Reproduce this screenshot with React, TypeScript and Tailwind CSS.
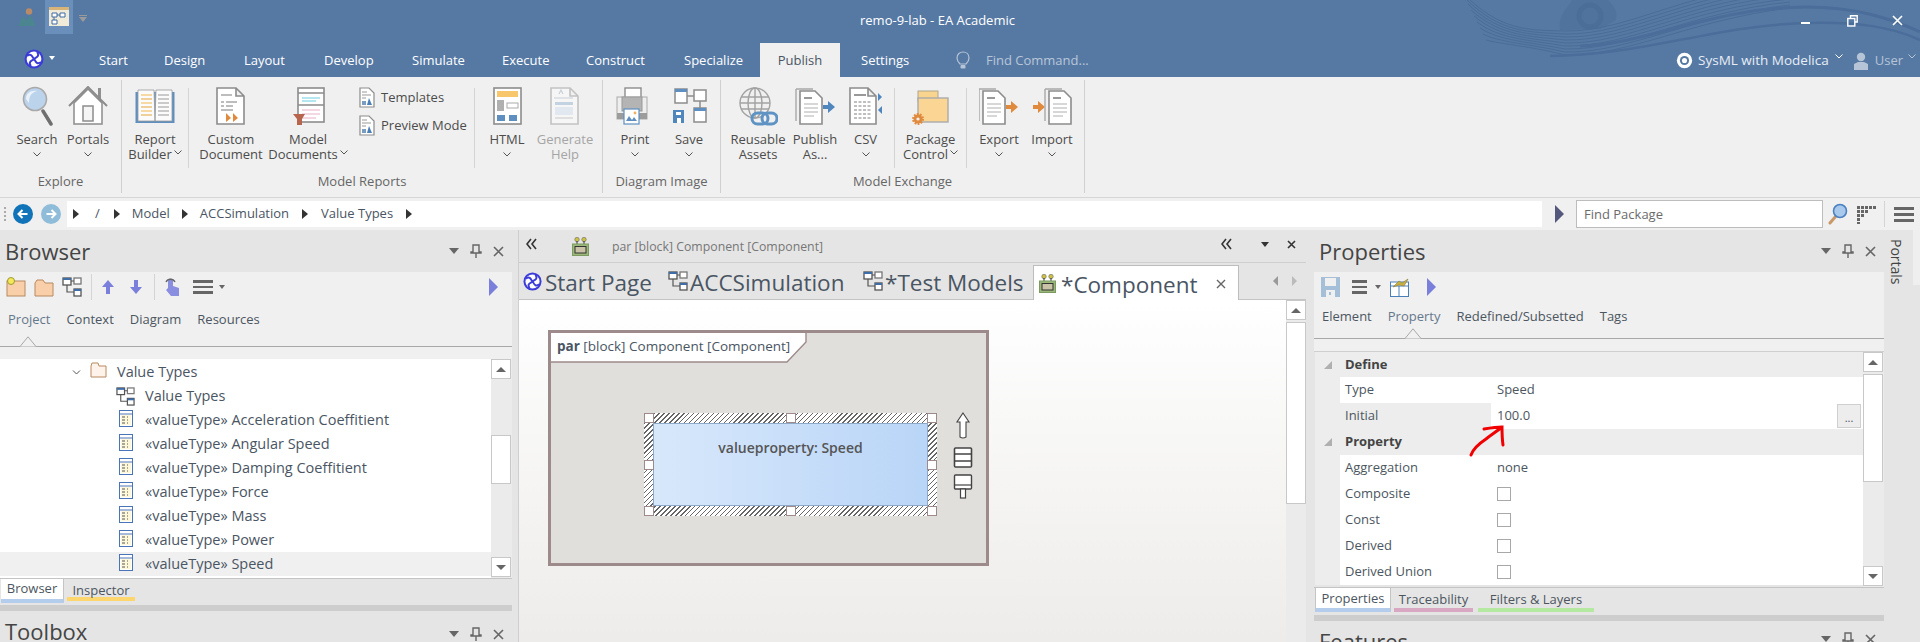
import React from "react";

const G = "#8c8c8c";

function Chevron({ className = "" }: { className?: string }) {
  return (
    <svg width="8" height="5" viewBox="0 0 8 5" className={className}>
      <path d="M0.5 0.5 L4 4 L7.5 0.5" fill="none" stroke="#555" strokeWidth="1" />
    </svg>
  );
}

function Logo({ size = 20 }: { size?: number }) {
  return (
    <svg width={size} height={size} viewBox="0 0 20 20">
      <circle cx="10" cy="10" r="9.5" fill="#3c3cd8" />
      <circle cx="10" cy="10" r="7.4" fill="#fff" />
      <path d="M3 7 C8 3 9 10 10 10 C11 10 12 17 17 13 M13 3 C17 8 10 9 10 10 C10 11 3 12 7 17" fill="none" stroke="#3c3cd8" strokeWidth="2" />
    </svg>
  );
}

function SearchIcon() {
  return (
    <svg width="40" height="40" viewBox="0 0 40 40">
      <path d="M26 25 L34 38" stroke="#6f6f6f" strokeWidth="3.5" strokeLinecap="round" />
      <circle cx="18" cy="13" r="11.5" fill="#bcd3ec" stroke="#a9a9a9" strokeWidth="1.6" />
      <path d="M9 13 C9 7 14 4 20 5 C14 7 12 10 12 17 Z" fill="#e9f1fa" />
    </svg>
  );
}

function HomeIcon() {
  return (
    <svg width="40" height="40" viewBox="0 0 40 40">
      <path d="M30 2 h3 v14 h-3 z" fill="#8f8f8f" />
      <path d="M6 17 L20 3 L34 17 V38 H6 Z" fill="#fff" stroke={G} strokeWidth="1.5" />
      <path d="M1 20 L20 1 L39 20" fill="none" stroke={G} strokeWidth="2" />
      <rect x="15" y="20" width="10" height="15" fill="#f5f5f5" stroke={G} strokeWidth="1.5" />
    </svg>
  );
}

function BookIcon() {
  return (
    <svg width="40" height="40" viewBox="0 0 40 40">
      <rect x="0.5" y="6" width="39" height="31" fill="#5f8fc0" />
      <path d="M3 4 H19 L20 35 H3 Z M37 4 H21 L20 35 H37 Z" fill="#fbfbfb" stroke="#999" strokeWidth="0.8" />
      {[9, 13, 17, 21, 25, 29].map((y) => (
        <g key={y}>
          <path d={`M6 ${y} H17`} stroke={y % 8 === 1 ? "#f2c46d" : "#e8b45a"} strokeWidth="1.2" />
          <path d={`M23 ${y} H34`} stroke="#aaa" strokeWidth="1.2" />
        </g>
      ))}
    </svg>
  );
}

function DocShape({ x = 6, y = 2, w = 27, h = 36 }: { x?: number; y?: number; w?: number; h?: number }) {
  return (
    <path
      d={`M${x} ${y} H${x + w - 8} L${x + w} ${y + 8} V${y + h} H${x} Z M${x + w - 8} ${y} V${y + 8} H${x + w}`}
      fill="#fff"
      stroke={G}
      strokeWidth="1.6"
    />
  );
}

function CustomDocIcon() {
  return (
    <svg width="40" height="40" viewBox="0 0 40 40">
      <DocShape />
      <path d="M10 9 H21 M10 16 H13 M15 16 H26 M10 20 H13 M15 20 H22 M10 24 H22" stroke="#a8a8a8" strokeWidth="1.4" />
      <path d="M15 27 L20 32 L15 36 Z M22 27 L27 32 L22 36 Z" fill="#e08a3e" />
    </svg>
  );
}

function ModelDocIcon() {
  return (
    <svg width="40" height="40" viewBox="0 0 40 40">
      <rect x="10" y="2" width="26" height="34" fill="#fff" stroke={G} strokeWidth="1.6" />
      <path d="M10 7 H36 M10 19 H36" stroke={G} strokeWidth="1.4" />
      <path d="M14 12 H32 M14 15 H28" stroke="#6bd0e0" strokeWidth="1.2" />
      <path d="M14 24 H32 M14 28 H32 M14 32 H28" stroke="#eab0c8" strokeWidth="1.2" />
      <path d="M5 28 H17 L14 33 V39 H9 V33 Z" fill="#b8654e" />
    </svg>
  );
}

function SmallTemplateIcon() {
  return (
    <svg width="16" height="21" viewBox="0 0 16 21">
      <path d="M1 1 H10 L15 6 V20 H1 Z" fill="#fff" stroke={G} strokeWidth="1.2" />
      <path d="M3 5 H8 M3 8 H12 M3 11 H7" stroke="#999" strokeWidth="1" />
      <path d="M8 18 L10 11 L13 18 Z" fill="#4a7fb8" />
      <path d="M3 14 H7 V18 H3 Z" fill="#7a9cc0" />
    </svg>
  );
}

function HtmlIcon() {
  return (
    <svg width="40" height="40" viewBox="0 0 40 40">
      <rect x="7" y="2" width="27" height="36" fill="#fff" stroke={G} strokeWidth="1.6" />
      <rect x="10" y="5" width="21" height="6" fill="#f8c66b" />
      <rect x="10" y="14" width="7" height="11" fill="#b0b0b0" />
      <rect x="20" y="17" width="11" height="5" fill="#fff" stroke="#aaa" />
      <rect x="10" y="29" width="8" height="6" fill="#5f8fc0" />
      <rect x="22" y="29" width="8" height="6" fill="#5f8fc0" />
    </svg>
  );
}

function HelpIcon() {
  return (
    <svg width="40" height="40" viewBox="0 0 40 40" opacity="0.45">
      <DocShape />
      <path d="M14 8 L16 4 L18 8 M9 12 H28" stroke="#9ab" strokeWidth="1.2" fill="none" />
      <rect x="10" y="16" width="18" height="3" fill="#8fb0d0" />
      <rect x="10" y="21" width="18" height="8" fill="#cfe0ee" />
      <path d="M10 32 H28" stroke="#aaa" strokeWidth="1.2" />
    </svg>
  );
}

function PrintIcon() {
  return (
    <svg width="40" height="40" viewBox="0 0 40 40">
      <rect x="10" y="2" width="16" height="12" fill="#fff" stroke={G} strokeWidth="1.4" />
      <rect x="2" y="11" width="30" height="22" fill="#eee" stroke="#aaa" />
      <rect x="7" y="11" width="20" height="14" fill="#b4b4b4" stroke="#999" />
      <rect x="2" y="27" width="30" height="6" fill="#9c9c9c" />
      <rect x="9" y="23" width="15" height="15" fill="#fff" stroke="#5f8fc0" strokeWidth="1.2" />
      <path d="M11 35 L14 30 L17 34 L19 31 L22 35 Z" fill="#5f8fc0" />
      <circle cx="20" cy="27" r="1.4" fill="#f0b060" />
    </svg>
  );
}

function SaveImageIcon() {
  return (
    <svg width="40" height="40" viewBox="0 0 40 40">
      <rect x="6" y="3" width="12" height="14" fill="#fff" stroke={G} strokeWidth="1.5" />
      <rect x="6" y="3" width="12" height="3" fill="#5f8fc0" />
      <rect x="25" y="4" width="12" height="11" fill="#fff" stroke={G} strokeWidth="1.5" />
      <path d="M18 10 H25 M31 15 V22" stroke={G} strokeWidth="1.5" />
      <rect x="25" y="22" width="12" height="14" fill="#fff" stroke={G} strokeWidth="1.5" />
      <rect x="25" y="22" width="12" height="3" fill="#5f8fc0" />
      <rect x="4" y="24" width="11" height="13" fill="#4f86bd" />
      <rect x="7" y="26" width="5" height="3" fill="#fff" />
      <rect x="8" y="32" width="4" height="5" fill="#fff" />
    </svg>
  );
}

function GlobeLinkIcon() {
  return (
    <svg width="40" height="40" viewBox="0 0 40 40">
      <g fill="none" stroke="#a2a2a2" strokeWidth="1.4">
        <circle cx="17" cy="17" r="15" />
        <ellipse cx="17" cy="17" rx="7" ry="15" />
        <path d="M17 2 V32 M3 11 H31 M3 23 H31 M2 17 H32" />
      </g>
      <rect x="14" y="27" width="16" height="11" rx="5.5" fill="none" stroke="#5f93c4" strokeWidth="3" />
      <rect x="24" y="27" width="15" height="11" rx="5.5" fill="none" stroke="#5f93c4" strokeWidth="3" />
    </svg>
  );
}

function DocStack({ x = 2 }: { x?: number }) {
  return (
    <g>
      <path d={`M${x} 3 H${x + 17} M${x} 3 V35`} stroke="#a8a8a8" strokeWidth="1.4" fill="none" />
      <path d={`M${x + 4} 5 H${x + 19} L${x + 26} 12 V38 H${x + 4} Z`} fill="#fff" stroke={G} strokeWidth="1.6" />
      <path d={`M${x + 8} 12 H${x + 16}`} stroke="#999" strokeWidth="2" />
      <path d={`M${x + 8} 18 H${x + 22} M${x + 8} 22 H${x + 22} M${x + 8} 26 H${x + 22} M${x + 8} 30 H${x + 18}`} stroke="#b0b0b0" strokeWidth="1.2" />
    </g>
  );
}

function PublishIcon() {
  return (
    <svg width="40" height="40" viewBox="0 0 40 40">
      <DocStack x={1} />
      <path d="M28 19 H33 V15 L40 21 L33 27 V23 H28 Z" fill="#4f86bd" />
    </svg>
  );
}

function CsvIcon() {
  return (
    <svg width="40" height="40" viewBox="0 0 40 40">
      <DocShape x={4} y={2} w={26} h={36} />
      <rect x="8" y="8" width="12" height="2" fill="#999" />
      {[16, 20, 24, 28, 32].map((y) => (
        <path key={y} d={`M8 ${y} H26`} stroke="#aaa" strokeWidth="1.4" strokeDasharray="3 1.5" />
      ))}
      <path d="M32 7 L36 11 L32 15 Z M36 20 L32 24 L36 28 Z" fill="#4f86bd" />
    </svg>
  );
}

function PackageIcon() {
  return (
    <svg width="40" height="40" viewBox="0 0 40 40">
      <rect x="7" y="5" width="20" height="10" fill="#f9d48f" stroke="#b0a68c" />
      <rect x="7" y="12" width="30" height="24" fill="#fad594" stroke="#aaa" strokeWidth="1.4" />
      <circle cx="7" cy="33" r="4.5" fill="#e08a3e" stroke="#e08a3e" strokeWidth="3" strokeDasharray="1.6 1.2" />
      <circle cx="7" cy="33" r="1.6" fill="#f0f0f0" />
    </svg>
  );
}

function ExportIcon() {
  return (
    <svg width="40" height="40" viewBox="0 0 40 40">
      <DocStack x={0} />
      <path d="M27 19 H32 V15 L39 21 L32 27 V23 H27 Z" fill="#e08a3e" />
    </svg>
  );
}

function ImportIcon() {
  return (
    <svg width="40" height="40" viewBox="0 0 40 40">
      <path d="M1 19 H6 V15 L13 21 L6 27 V23 H1 Z" fill="#e08a3e" />
      <DocStack x={13} />
    </svg>
  );
}

function RibbonButton({
  width,
  icon,
  lines,
  chevron,
  disabled,
}: {
  width: string;
  icon: React.ReactNode;
  lines: string[];
  chevron?: boolean;
  disabled?: boolean;
}) {
  return (
    <div className={`${width} flex flex-col items-center ${disabled ? "text-[#a5a5a5]" : ""}`}>
      <div className="h-[52px] flex items-center justify-center">{icon}</div>
      {lines.map((l, i) => (
        <div key={l} className="h-[15px] leading-[15px] whitespace-nowrap flex items-center">
          {l}
          {chevron && lines.length === 2 && i === 1 && <Chevron className="ml-0.5 mb-1" />}
        </div>
      ))}
      {chevron && lines.length === 1 && (
        <div className="h-[15px] flex items-center">
          <Chevron />
        </div>
      )}
    </div>
  );
}

function RibbonSep() {
  return <div className="w-px h-[80px] bg-[#d4d4d4] mt-[8px]" />;
}

function RibbonGroup({ width, label, children }: { width: string; label: string; children: React.ReactNode }) {
  return (
    <div className={`${width} h-[113px] border-r border-[#d0d0d0] flex flex-col`}>
      <div className="flex h-[92px]">{children}</div>
      <div className="text-center text-[#666] leading-[18px]">{label}</div>
    </div>
  );
}

const topTabs = [
  { t: "Start", w: "w-[65px]" },
  { t: "Design", w: "w-[80px]" },
  { t: "Layout", w: "w-[80px]" },
  { t: "Develop", w: "w-[88px]" },
  { t: "Simulate", w: "w-[90px]" },
  { t: "Execute", w: "w-[84px]" },
  { t: "Construct", w: "w-[98px]" },
  { t: "Specialize", w: "w-[76px]" },
];

function Swoosh() {
  return (
    <svg className="absolute right-0 top-0 pointer-events-none" width="460" height="77" viewBox="0 0 460 77">
      <path d="M100 30 C98 14 108 8 112 0 H148 C154 6 158 12 156 20 L140 29 Z" fill="#4f739d" />
      <circle cx="130" cy="16" r="11" fill="none" stroke="#4a6e97" strokeWidth="5" />
      {[0, 1, 2, 3, 4, 5, 6, 7, 8].map((i) => (
        <path
          key={i}
          d={`M${2 + i * 3} ${i * 6 - 8} C40 ${32 + i * 1.5}, 70 ${30 + i * 2}, 105 ${31 + i * 3} C170 ${32 + i * 3}, 230 ${-12 + i * 4}, 330 ${-16 + i * 3}`}
          fill="none"
          stroke="#4a6d98"
          strokeWidth="1"
        />
      ))}
      <path d="M120 46 C190 44 250 8 345 7 C395 7 430 18 460 32" fill="none" stroke="#4a6e99" strokeWidth="3" />
      <path d="M90 56 C180 56 260 24 350 23 C395 22 430 26 460 40" fill="none" stroke="#4a6e99" strokeWidth="2.5" />
    </svg>
  );
}

function TitleBar() {
  return (
    <div className="relative h-[77px] bg-[#5679a4] text-white shrink-0">
      <Swoosh />
      <div className="relative h-[43px] flex">
        <div className="w-[860px] flex">
          <div className="w-[45px] flex justify-end items-start pt-[8px] pr-[9px]">
            <svg width="18" height="18" viewBox="0 0 18 18">
              <circle cx="11" cy="3.5" r="3.2" fill="#b98a68" />
              <path d="M0 18 L5 8 L9 13 L11 8 H13 L18 18 Z" fill="#4a8590" />
            </svg>
          </div>
          <div className="w-[28px] h-[34px] bg-[#6b8fbb] flex justify-center pt-[7px]">
            <svg width="20" height="19" viewBox="0 0 20 19">
              <rect x="0" y="0" width="20" height="19" fill="#f0ead8" />
              <rect x="0" y="0" width="20" height="3" fill="#d8b478" />
              <path d="M3 6 h5 v4 h-5 z M11 6 h5 v4 h-5 z M3 13 h5 v4 h-5 z" fill="#fff" stroke="#3f6da0" />
              <path d="M8 8 h3 M5 10 v3" stroke="#3f6da0" />
            </svg>
          </div>
          <div className="ml-[6px] mt-[15px] w-[8px] flex flex-col items-center gap-px">
            <div className="w-[8px] h-px bg-[#9a9a9a]" />
            <div className="w-0 h-0 border-x-[4px] border-x-transparent border-t-[5px] border-t-[#9a9a9a]" />
          </div>
        </div>
        <div className="text-[13px] leading-[40px] whitespace-nowrap">remo-9-lab - EA Academic</div>
        <div className="ml-auto flex">
          <div className="w-[46px] flex justify-center pt-[22px] pr-[4px]">
            <div className="w-[9px] h-[2px] bg-white" />
          </div>
          <div className="w-[44px] flex justify-center pt-[15px]">
            <svg width="11" height="12" viewBox="0 0 11 12">
              <path d="M3.5 3 V0.8 H10.2 V7 H8" fill="none" stroke="#fff" strokeWidth="1.4" />
              <rect x="0.8" y="3.5" width="7" height="7.5" fill="none" stroke="#fff" strokeWidth="1.4" />
            </svg>
          </div>
          <div className="w-[46px] flex justify-center pt-[15px]">
            <svg width="11" height="11" viewBox="0 0 11 11">
              <path d="M1 1 L10 10 M10 1 L1 10" stroke="#fff" strokeWidth="1.6" />
            </svg>
          </div>
        </div>
      </div>
      <div className="relative h-[34px] flex text-[13px] leading-[34px]">
        <div className="w-[99px] flex items-start">
          <div className="ml-[24px] mt-[6px]">
            <Logo />
          </div>
          <div className="ml-[5px] mt-[13px] w-0 h-0 border-x-[3.5px] border-x-transparent border-t-[4px] border-t-white" />
        </div>
        {topTabs.map((tab) => (
          <div key={tab.t} className={`${tab.w} whitespace-nowrap`}>
            {tab.t}
          </div>
        ))}
        <div className="w-[80px] bg-[#f0f0f0] text-[#4a5563] text-center">Publish</div>
        <div className="w-[115px] pl-[21px]">Settings</div>
        <div className="w-[31px] flex pt-[8px] pl-[1px]">
          <svg width="14" height="19" viewBox="0 0 14 19">
            <path d="M4 13 C1 10 1 8 1 7 C1 3 4 1 7 1 C10 1 13 3 13 7 C13 8 13 10 10 13 Z" fill="none" stroke="#b5c4d6" strokeWidth="1.2" />
            <rect x="4.5" y="14" width="5" height="3.5" rx="1" fill="#b5c4d6" />
          </svg>
        </div>
        <div className="text-[#b8c6d8]">Find Command...</div>
        <div className="ml-auto flex items-start">
          <svg width="17" height="17" viewBox="0 0 16 16" className="mt-[9px] mr-[5px]">
            <circle cx="8" cy="8" r="7.2" fill="#fff" />
            <circle cx="8" cy="8" r="4.3" fill="#5679a4" />
            <circle cx="8" cy="8" r="2.4" fill="#fff" />
          </svg>
          <span className="text-[13.5px] text-[#e6edf5]">SysML with Modelica</span>
          <svg width="8" height="5" viewBox="0 0 8 5" className="mt-[11px] ml-[6px]">
            <path d="M0.5 0.5 L4 4 L7.5 0.5" fill="none" stroke="#fff" strokeWidth="1" />
          </svg>
          <svg width="14" height="18" viewBox="0 0 14 18" className="mt-[9px] ml-[11px] mr-[7px]">
            <circle cx="7" cy="5" r="4.2" fill="#b5c4d6" />
            <path d="M0 18 V12 L4 10 H10 L14 12 V18 Z" fill="#b5c4d6" />
          </svg>
          <span className="text-[13px] text-[#b5c4d6]">User</span>
          <svg width="8" height="5" viewBox="0 0 8 5" className="mt-[11px] ml-[5px] mr-[4px]">
            <path d="M0.5 0.5 L4 4 L7.5 0.5" fill="none" stroke="#b5c4d6" strokeWidth="1" />
          </svg>
        </div>
      </div>
    </div>
  );
}

function Ribbon() {
  return (
    <div className="h-[121px] bg-[#f0f0f0] border-b border-[#d6d6d6] pt-[3px] flex text-[13px] text-[#4c4c4c] shrink-0">
      <RibbonGroup width="w-[122px]" label="Explore">
        <div className="w-[12px]" />
        <RibbonButton width="w-[50px]" icon={<SearchIcon />} lines={["Search"]} chevron />
        <RibbonButton width="w-[52px]" icon={<HomeIcon />} lines={["Portals"]} chevron />
      </RibbonGroup>
      <RibbonGroup width="w-[481px]" label="Model Reports">
        <RibbonButton width="w-[66px]" icon={<BookIcon />} lines={["Report", "Builder"]} chevron />
        <RibbonSep />
        <RibbonButton width="w-[84px]" icon={<CustomDocIcon />} lines={["Custom", "Document"]} />
        <RibbonButton width="w-[70px]" icon={<ModelDocIcon />} lines={["Model", "Documents"]} chevron />
        <div className="w-[131px] pl-[16px] pt-[7px] flex flex-col gap-[7px]">
          <div className="flex items-center gap-[6px]">
            <SmallTemplateIcon />
            Templates
          </div>
          <div className="flex items-center gap-[6px]">
            <SmallTemplateIcon />
            Preview Mode
          </div>
        </div>
        <RibbonSep />
        <RibbonButton width="w-[64px]" icon={<HtmlIcon />} lines={["HTML"]} chevron />
        <RibbonButton width="w-[52px]" icon={<HelpIcon />} lines={["Generate", "Help"]} disabled />
      </RibbonGroup>
      <RibbonGroup width="w-[118px]" label="Diagram Image">
        <div className="w-[7px]" />
        <RibbonButton width="w-[50px]" icon={<PrintIcon />} lines={["Print"]} chevron />
        <div className="w-[4px]" />
        <RibbonButton width="w-[50px]" icon={<SaveImageIcon />} lines={["Save"]} chevron />
      </RibbonGroup>
      <RibbonGroup width="w-[364px]" label="Model Exchange">
        <div className="w-[5px]" />
        <RibbonButton width="w-[64px]" icon={<GlobeLinkIcon />} lines={["Reusable", "Assets"]} />
        <RibbonButton width="w-[50px]" icon={<PublishIcon />} lines={["Publish", "As..."]} />
        <RibbonButton width="w-[51px]" icon={<CsvIcon />} lines={["CSV"]} chevron />
        <div className="w-[3px]" />
        <RibbonSep />
        <RibbonButton width="w-[71px]" icon={<PackageIcon />} lines={["Package", "Control"]} chevron />
        <RibbonSep />
        <div className="w-[7px]" />
        <RibbonButton width="w-[50px]" icon={<ExportIcon />} lines={["Export"]} chevron />
        <div className="w-[3px]" />
        <RibbonButton width="w-[50px]" icon={<ImportIcon />} lines={["Import"]} chevron />
      </RibbonGroup>
    </div>
  );
}

function Tri({ className = "" }: { className?: string }) {
  return <div className={`w-0 h-0 border-y-[5px] border-y-transparent border-l-[6px] border-l-[#333] ${className}`} />;
}

function NavCircle({ dark }: { dark?: boolean }) {
  return (
    <svg width="22" height="22" viewBox="0 0 22 22">
      <circle cx="11" cy="11" r="10" fill={dark ? "#1274b8" : "#8fbcd8"} />
      <path
        d={dark ? "M15.5 11 H7 M10.5 7 L6.5 11 L10.5 15" : "M6.5 11 H15 M11.5 7 L15.5 11 L11.5 15"}
        fill="none"
        stroke="#fff"
        strokeWidth="2"
      />
    </svg>
  );
}

function PathBar() {
  return (
    <div className="h-[32px] bg-[#f0f0f0] flex items-center text-[13px] text-[#4a5563] shrink-0">
      <div className="w-[2px] h-[14px] ml-[4px] mr-[6px] border-l-2 border-dotted border-[#aaa]" />
      <NavCircle dark />
      <div className="w-[6px]" />
      <NavCircle />
      <div className="ml-[5px] w-[1475px] h-[26px] bg-white flex items-center">
        <Tri className="ml-[6px]" />
        <span className="ml-[16px]">/</span>
        <Tri className="ml-[14px]" />
        <span className="ml-[12px]">Model</span>
        <Tri className="ml-[12px]" />
        <span className="ml-[12px]">ACCSimulation</span>
        <Tri className="ml-[13px]" />
        <span className="ml-[13px]">Value Types</span>
        <Tri className="ml-[13px]" />
      </div>
      <div className="ml-[13px] w-0 h-0 border-y-[9px] border-y-transparent border-l-[9px] border-l-[#54587c]" />
      <div className="ml-[12px] w-[247px] h-[28px] bg-white border border-[#bdbdbd] pl-[7px] leading-[26px] text-[#6b6b6b] text-[13px]">
        Find Package
      </div>
      <svg width="20" height="22" viewBox="0 0 20 22" className="ml-[5px]">
        <path d="M8 13 L2 20" stroke="#c89868" strokeWidth="3" strokeLinecap="round" />
        <circle cx="12" cy="8" r="6.5" fill="#a8c8ec" stroke="#4a7fc0" strokeWidth="1.6" />
      </svg>
      <svg width="20" height="20" viewBox="0 0 20 20" className="ml-[8px]">
        {[
          [1, 2],
          [5, 2],
          [9, 2],
          [13, 2],
          [17, 2],
          [1, 6],
          [5, 6],
          [9, 6],
          [1, 10],
          [5, 10],
          [1, 14],
          [1, 18],
        ].map(([x, y]) => (
          <rect key={`${x}-${y}`} x={x} y={y} width="3" height="3" fill="#666" />
        ))}
      </svg>
      <div className="ml-[8px] w-px h-[26px] bg-[#d4d4d4]" />
      <div className="ml-[9px] w-[20px] flex flex-col gap-[3px]">
        <div className="h-[3px] bg-[#666]" />
        <div className="h-[3px] bg-[#666]" />
        <div className="h-[3px] bg-[#666]" />
      </div>
    </div>
  );
}

function PanelControls() {
  return (
    <div className="flex items-center gap-[11px] pr-[8px]">
      <div className="w-0 h-0 border-x-[5px] border-x-transparent border-t-[6px] border-t-[#666]" />
      <svg width="12" height="14" viewBox="0 0 12 14">
        <path d="M3 1 H9 V8 H11 V9 H1 V8 H3 Z M6 9 V14" fill="none" stroke="#666" strokeWidth="1.4" />
      </svg>
      <svg width="11" height="11" viewBox="0 0 11 11">
        <path d="M1 1 L10 10 M10 1 L1 10" stroke="#666" strokeWidth="1.6" />
      </svg>
    </div>
  );
}

function Hamburger() {
  return (
    <div className="w-[20px] flex flex-col gap-[3px]">
      <div className="h-[2.5px] bg-[#666]" />
      <div className="h-[2.5px] bg-[#666]" />
      <div className="h-[2.5px] bg-[#666]" />
    </div>
  );
}

function DiagramGlyph({ size = 20 }: { size?: number }) {
  return (
    <svg width={size} height={size} viewBox="0 0 20 20">
      <rect x="1" y="1" width="8" height="7" fill="#fff" stroke="#555" strokeWidth="1.3" />
      <rect x="12" y="1" width="7" height="6" fill="#fff" stroke="#777" strokeWidth="1.3" />
      <rect x="12" y="12" width="7" height="7" fill="#fff" stroke="#555" strokeWidth="1.3" />
      <rect x="1" y="1" width="8" height="2" fill="#3f6da8" />
      <rect x="12" y="12" width="7" height="2" fill="#3f6da8" />
      <path d="M9 4 H12 M5 8 V15 H12" fill="none" stroke="#555" strokeWidth="1.2" />
    </svg>
  );
}

function BrowserToolbar() {
  return (
    <div className="h-[30px] bg-[#f0f0f0] flex items-center">
      <div className="w-[2px]" />
      <div className="w-[28px] flex justify-center">
        <svg width="20" height="20" viewBox="0 0 20 20">
          <rect x="1" y="4" width="18" height="15" fill="#f8cfa8" stroke="#b88a60" />
          <circle cx="5" cy="4" r="3.5" fill="#f4e85a" stroke="#9c9a30" />
        </svg>
      </div>
      <div className="w-[28px] flex justify-center">
        <svg width="20" height="19" viewBox="0 0 20 19">
          <path d="M1 5 L3 2 H9 L11 5 H19 V18 H1 Z" fill="#f8cfa8" stroke="#b88a60" />
        </svg>
      </div>
      <div className="w-[28px] flex justify-center">
        <DiagramGlyph />
      </div>
      <div className="ml-[5px] w-px h-[26px] bg-[#d4d4d4]" />
      <div className="w-[27px] flex justify-center ml-[2px]">
        <svg width="12" height="14" viewBox="0 0 12 14">
          <path d="M6 0 L12 7 H8 V14 H4 V7 H0 Z" fill="#7a7fdc" />
        </svg>
      </div>
      <div className="w-[29px] flex justify-center">
        <svg width="12" height="14" viewBox="0 0 12 14">
          <path d="M6 14 L12 7 H8 V0 H4 V7 H0 Z" fill="#7a7fdc" />
        </svg>
      </div>
      <div className="ml-[4px] w-px h-[26px] bg-[#d4d4d4]" />
      <div className="ml-[9px] w-[16px] flex justify-center">
        <svg width="16" height="20" viewBox="0 0 16 20">
          <path d="M4 11 V4 A2.5 2.5 0 0 1 9 4 V9 L15 11 V19 H7 L2 13 Z" fill="#8a8ee0" />
          <path d="M2 5 A5 5 0 0 1 11 5" fill="none" stroke="#666" strokeWidth="1.4" />
        </svg>
      </div>
      <div className="ml-[13px]">
        <Hamburger />
      </div>
      <div className="ml-[6px] w-0 h-0 border-x-[3px] border-x-transparent border-t-[4px] border-t-[#666]" />
      <div className="ml-auto mr-[14px] w-0 h-0 border-y-[9px] border-y-transparent border-l-[9px] border-l-[#7a7fdc]" />
    </div>
  );
}

function ScrollBtn({ up }: { up?: boolean }) {
  return (
    <div className="w-[20px] h-[20px] bg-white border border-[#c8c8c8] flex items-center justify-center shrink-0">
      <div
        className={`w-0 h-0 border-x-[5px] border-x-transparent ${
          up ? "border-b-[5px] border-b-[#666]" : "border-t-[5px] border-t-[#666]"
        }`}
      />
    </div>
  );
}

function ClassGlyph() {
  return (
    <svg width="14" height="17" viewBox="0 0 14 17">
      <rect x="0.5" y="0.5" width="13" height="16" fill="#fff" stroke="#4a74b8" />
      <path d="M0.5 4 H13.5" stroke="#4a74b8" />
      <rect x="2" y="5" width="10" height="10" fill="#fdf9d8" />
      <path d="M3 7 H6 M3 10 H6 M3 13 H6 M8 7 H9 M8 10 H9 M8 13 H9" stroke="#555" />
    </svg>
  );
}

function BrowserTree() {
  const types = ["Acceleration Coeffitient", "Angular Speed", "Damping Coeffitient", "Force", "Mass", "Power", "Speed"];
  return (
    <div className="h-[219px] flex bg-white">
      <div className="flex-1 pt-px text-[14.5px] text-[#4a5563] overflow-hidden">
        <div className="h-[24px] flex items-center">
          <div className="w-[72px]" />
          <Chevron className="w-[9px]" />
          <svg width="17" height="16" viewBox="0 0 17 16" className="ml-[9px] -mt-[4px]">
            <path d="M1 4 L2 1 H8 L9 4 H16 V15 H1 Z" fill="#fdf3ea" stroke="#b88a60" />
          </svg>
          <span className="ml-[10px]">Value Types</span>
        </div>
        <div className="h-[24px] flex items-center">
          <div className="w-[116px] flex justify-end shrink-0" />
          <DiagramGlyph size={19} />
          <span className="ml-[10px]">Value Types</span>
        </div>
        {types.map((t) => (
          <div key={t} className={`h-[24px] flex items-center ${t === "Speed" ? "bg-[#f0f0f0]" : ""}`}>
            <div className="w-[119px] shrink-0" />
            <div className="-mt-[4px] flex">
              <ClassGlyph />
            </div>
            <span className="ml-[12px] whitespace-nowrap">«valueType» {t}</span>
          </div>
        ))}
        <div className="ml-[91px] mt-[2px] w-[10px] h-px bg-[#b88a60]" />
      </div>
      <div className="w-[21px] bg-[#ebebeb] flex flex-col pt-0">
        <ScrollBtn up />
        <div className="h-[56px]" />
        <div className="w-[20px] h-[49px] bg-white border border-[#c8c8c8]" />
        <div className="flex-1" />
        <ScrollBtn />
        <div className="h-px" />
      </div>
    </div>
  );
}

function TabNotch({ cls }: { cls: string }) {
  return (
    <svg width="18" height="11" viewBox="0 0 18 11" className={`absolute bottom-0 ${cls}`}>
      <path d="M0 10.5 H1 L9 0.8 L17 10.5 H18" fill="#f0f0f0" stroke="#a8a8a8" />
    </svg>
  );
}

function LeftPanel() {
  return (
    <div className="w-[512px] flex flex-col shrink-0">
      <div className="h-[42px] flex items-center justify-between pl-[5px] text-[#444]">
        <span className="text-[22px]">Browser</span>
        <PanelControls />
      </div>
      <BrowserToolbar />
      <div className="h-[57px] bg-[#f0f0f0] flex flex-col">
        <div className="relative h-[45px] border-b border-[#a8a8a8] flex items-start pt-[8px] pl-[8px] gap-4 text-[13px] text-[#4c5660]">
          <span className="text-[#66788c]">Project</span>
          <span>Context</span>
          <span>Diagram</span>
          <span>Resources</span>
          <TabNotch cls="left-[19px] -mb-px" />
        </div>
      </div>
      <BrowserTree />
      <div className="h-[25px] flex border-t border-[#c4c4c4] text-[13px] text-[#4c5660]">
        <div className="w-[63px] ml-px bg-white border-r border-[#c4c4c4] border-b-[4px] border-b-[#b4cdec] text-center leading-[19px]">
          Browser
        </div>
        <div className="w-[68px] ml-[3px] mb-[2px] border-b-[4px] border-b-[#fdd66e] text-center leading-[22px]">Inspector</div>
      </div>
      <div className="h-[2px]" />
      <div className="h-[6px] bg-[#cdcdcd]" />
      <div className="flex-1 min-h-0 overflow-hidden flex items-start justify-between pl-[5px] pt-[5px] text-[#444]">
        <span className="text-[22px] leading-[30px]">Toolbox</span>
        <div className="pt-[11px]">
          <PanelControls />
        </div>
      </div>
    </div>
  );
}

function BlockGlyph() {
  return (
    <svg width="17" height="19" viewBox="0 0 17 19">
      <circle cx="5" cy="2.5" r="2.2" fill="#cdc23a" stroke="#777" strokeWidth="0.7" />
      <circle cx="12" cy="2.5" r="2.2" fill="#cdc23a" stroke="#777" strokeWidth="0.7" />
      <path d="M5 4 V8 M12 4 V8" stroke="#333" />
      <rect x="0.5" y="7" width="16" height="11.5" fill="#9ab87a" stroke="#7d9a60" />
      <rect x="3" y="9.5" width="11" height="6.5" fill="#c9c2a6" stroke="#333" />
    </svg>
  );
}

function DoubleChevron() {
  return (
    <svg width="11" height="12" viewBox="0 0 11 12">
      <path d="M5 1 L1 6 L5 11 M10 1 L6 6 L10 11" fill="none" stroke="#333" strokeWidth="1.6" />
    </svg>
  );
}

function CenterPanel() {
  return (
    <div className="w-[788px] ml-[6px] flex flex-col shrink-0 border-l border-[#cfcfcf]">
      <div className="h-[33px] flex items-center border-b border-[#cfcfcf] text-[12.3px] text-[#777]">
        <div className="w-[24px] flex justify-center -mt-[4px]">
          <DoubleChevron />
        </div>
        <div className="ml-[29px]">
          <BlockGlyph />
        </div>
        <span className="ml-[23px] mt-[3px] whitespace-nowrap">par [block] Component [Component]</span>
        <div className="ml-auto -mt-[4px] flex">
          <DoubleChevron />
        </div>
        <div className="ml-[29px] w-0 h-0 border-x-[4px] border-x-transparent border-t-[5px] border-t-[#333] -mt-[4px]" />
        <svg width="9" height="9" viewBox="0 0 9 9" className="ml-[18px] mr-[10px] -mt-[4px]">
          <path d="M1 1 L8 8 M8 1 L1 8" stroke="#333" strokeWidth="1.6" />
        </svg>
      </div>
      <div className="h-[37px] flex text-[22.5px] text-[#4a5563] border-b border-[#c4c4c4]">
        <div className="flex items-center pl-[4px] w-[149px]">
          <Logo size={19} />
          <span className="ml-[3px] mt-[3px] whitespace-nowrap">Start Page</span>
        </div>
        <div className="flex items-center w-[195px]">
          <DiagramGlyph size={20} />
          <span className="ml-[2px] mt-[3px] whitespace-nowrap">ACCSimulation</span>
        </div>
        <div className="flex items-center w-[170px]">
          <DiagramGlyph size={20} />
          <span className="ml-[2px] mt-[3px] whitespace-nowrap">*Test Models</span>
        </div>
        <div className="h-[36px] mt-[2px] flex items-center w-[206px] bg-white border border-b-0 border-[#bdbdbd] pl-[5px] -mb-px">
          <BlockGlyph />
          <span className="ml-[5px] mt-[3px] whitespace-nowrap">*Component</span>
          <svg width="10" height="10" viewBox="0 0 10 10" className="ml-auto mr-[12px]">
            <path d="M1 1 L9 9 M9 1 L1 9" stroke="#666" strokeWidth="1.4" />
          </svg>
        </div>
        <div className="flex items-center gap-[14px] ml-[34px]">
          <div className="w-0 h-0 border-y-[5px] border-y-transparent border-r-[5px] border-r-[#999]" />
          <div className="w-0 h-0 border-y-[5px] border-y-transparent border-l-[5px] border-l-[#bbb]" />
        </div>
      </div>
      <div className="flex-1 flex min-h-0">
        <Canvas />
        <div className="w-[20px] bg-[#ebebeb] flex flex-col">
          <ScrollBtn up />
          <div className="h-[2px]" />
          <div className="w-[20px] h-[182px] bg-white border border-[#c8c8c8]" />
        </div>
      </div>
    </div>
  );
}

function Handle({ cls }: { cls: string }) {
  return <div className={`absolute w-[10px] h-[10px] bg-white border border-[#9d8b8b] ${cls}`} />;
}

function Canvas() {
  return (
    <div className="relative flex-1 bg-gradient-to-b from-white to-[#edecea]">
      <div className="absolute left-[29px] top-[30px] w-[441px] h-[236px] bg-[#e1dfdc] border-[3px] border-[#9d8b8b]">
        <svg width="258" height="31" viewBox="0 0 258 31" className="absolute left-0 top-0">
          <path d="M0 0 H255 V9 L236 29 H0 Z" fill="#fff" />
          <path d="M255 0 V9 L236 29 H0" fill="none" stroke="#9d8b8b" strokeWidth="1.4" />
        </svg>
        <div className="absolute left-[6px] top-[4px] text-[13.5px] leading-[18px] text-[#4a5563] whitespace-nowrap">
          <b>par</b> [block] Component [Component]
        </div>
        <div className="absolute left-[93px] top-[80px] w-[293px] h-[103px] bg-[repeating-linear-gradient(135deg,#666_0_1px,#fff_1px_3.5px)]">
          <div className="absolute left-[9px] top-[10px] w-[275px] h-[83px] bg-gradient-to-r from-[#d8e8fb] to-[#b9d5f7] border border-[#8ea9c8] text-center pt-[13px] text-[14px] font-semibold text-[#555]">
            valueproperty: Speed
          </div>
          <Handle cls="left-0 top-0" />
          <Handle cls="left-[142px] top-0" />
          <Handle cls="right-0 top-0" />
          <Handle cls="left-0 top-[47px]" />
          <Handle cls="right-0 top-[47px]" />
          <Handle cls="left-0 bottom-0" />
          <Handle cls="left-[142px] bottom-0" />
          <Handle cls="right-0 bottom-0" />
        </div>
        <svg width="20" height="88" viewBox="0 0 20 88" className="absolute left-[402px] top-[79px]">
          <path d="M10 1 L16 10 H13 V25 Q10 27 7 25 V10 H4 Z" fill="#fff" stroke="#444" strokeWidth="1.1" />
          <rect x="1.5" y="36" width="17" height="19" rx="1" fill="#fff" stroke="#444" strokeWidth="1.6" />
          <path d="M1.5 42 H18.5 M1.5 49 H18.5" stroke="#444" strokeWidth="1.6" />
          <rect x="1.5" y="63" width="17" height="14" rx="1" fill="#fff" stroke="#444" strokeWidth="1.4" />
          <path d="M1.5 73 H18.5" stroke="#444" strokeWidth="1.2" />
          <rect x="7.5" y="77" width="5" height="9" fill="#fff" stroke="#444" strokeWidth="1.2" />
        </svg>
      </div>
    </div>
  );
}

function Checkbox() {
  return <div className="w-[14px] h-[14px] bg-white border border-[#a8a8a8]" />;
}

function SectionRow({ label, h = "h-[26px]" }: { label: string; h?: string }) {
  return (
    <div className={`${h} bg-[#ededed] flex items-center`}>
      <svg width="8" height="8" viewBox="0 0 8 8" className="ml-[9px] mr-[13px]">
        <path d="M8 0 V8 H0 Z" fill="#b0b0b0" />
      </svg>
      <b className="font-bold text-[#444]">{label}</b>
    </div>
  );
}

function PropRow({ name, children }: { name: string; children?: React.ReactNode }) {
  return (
    <div className="h-[26px] flex bg-[#ededed]">
      <div className="w-[151px] ml-[25px] pl-[5px] flex items-center bg-white">{name}</div>
      <div className="flex-1 bg-white flex items-center pl-[6px]">{children}</div>
    </div>
  );
}

function RightPanel() {
  return (
    <div className="w-[570px] ml-[8px] flex flex-col shrink-0">
      <div className="h-[42px] flex items-center justify-between pl-[5px] text-[#444]">
        <span className="text-[22px]">Properties</span>
        <PanelControls />
      </div>
      <div className="h-[30px] bg-[#f0f0f0] flex items-center">
        <svg width="19" height="20" viewBox="0 0 19 20" className="ml-[7px]">
          <path d="M0 0 H19 V20 H0 Z" fill="#a6bfd8" />
          <rect x="4" y="1" width="11" height="8" fill="#f0f0f0" />
          <rect x="5" y="13" width="9" height="7" fill="#f0f0f0" />
          <rect x="8" y="15" width="2" height="3" fill="#a6bfd8" />
        </svg>
        <div className="ml-[12px] w-[15px]">
          <div className="flex flex-col gap-[3px]">
            <div className="h-[2.5px] bg-[#666]" />
            <div className="h-[2.5px] bg-[#666]" />
            <div className="h-[2.5px] bg-[#666]" />
          </div>
        </div>
        <div className="ml-[8px] w-0 h-0 border-x-[3px] border-x-transparent border-t-[4px] border-t-[#666]" />
        <svg width="19" height="19" viewBox="0 0 19 19" className="ml-[9px]">
          <rect x="0.5" y="4" width="18" height="14.5" fill="#fff" stroke="#4a7fb8" />
          <path d="M0.5 8 H18.5 M9 8 V18" stroke="#4a7fb8" />
          <path d="M3 9 L9 3 L12 5 L18 1 L14 8 L9 7 Z" fill="#c8b040" stroke="#8a7a30" strokeWidth="0.6" />
        </svg>
        <div className="ml-[18px] w-0 h-0 border-y-[9px] border-y-transparent border-l-[9px] border-l-[#7a7fdc]" />
      </div>
      <div className="relative h-[49px] bg-[#f0f0f0]">
        <div className="h-[37px] border-b border-[#a8a8a8] flex items-start pl-[8px] pt-[5px] gap-4 text-[13px] text-[#4c5660]">
          <span>Element</span>
          <span className="text-[#66788c]">Property</span>
          <span>Redefined/Subsetted</span>
          <span>Tags</span>
        </div>
        <TabNotch cls="left-[90px] bottom-[12px]" />
      </div>
      <div className="relative h-[236px] flex border-t border-[#cfcfcf] text-[13px] text-[#4c5660]">
        <div className="flex-1 ml-px overflow-hidden">
          <SectionRow label="Define" h="h-[25px]" />
          <PropRow name="Type">Speed</PropRow>
          <div className="h-[26px] flex bg-[#ededed]">
            <div className="w-[151px] ml-[25px] pl-[5px] flex items-center">Initial</div>
            <div className="flex-1 bg-white flex items-center pl-[6px]">
              100.0
              <div className="ml-auto mr-[2px] w-[24px] h-[24px] bg-[#ededed] border border-[#cfcfcf] text-center leading-[26px] text-[11px]">
                ...
              </div>
            </div>
          </div>
          <SectionRow label="Property" />
          <PropRow name="Aggregation">none</PropRow>
          <PropRow name="Composite">
            <Checkbox />
          </PropRow>
          <PropRow name="Const">
            <Checkbox />
          </PropRow>
          <PropRow name="Derived">
            <Checkbox />
          </PropRow>
          <PropRow name="Derived Union">
            <Checkbox />
          </PropRow>
        </div>
        <div className="w-[21px] bg-[#ebebeb] flex flex-col">
          <ScrollBtn up />
          <div className="h-[2px]" />
          <div className="w-[20px] h-[108px] bg-white border border-[#c8c8c8]" />
          <div className="flex-1" />
          <ScrollBtn />
          <div className="h-px" />
        </div>
        <svg width="40" height="36" viewBox="0 0 40 36" className="absolute left-[152px] top-[71px]">
          <path d="M5 32 C7 26 14 20 20 16 C25 12 30 9 36 4 M18 6 C24 5 30 4 36 4 C36 9 36 15 37 22" fill="none" stroke="#f00000" strokeWidth="3" strokeLinecap="round" />
        </svg>
      </div>
      <div className="h-[25px] flex border-t border-[#c4c4c4] text-[13px] text-[#4c5660]">
        <div className="w-[76px] ml-px bg-white border-x border-[#c4c4c4] border-b-[4px] border-b-[#b4cdec] text-center leading-[20px]">
          Properties
        </div>
        <div className="w-[79px] ml-[3px] border-b-[4px] border-b-[#d8a8c2] text-center leading-[22px]">Traceability</div>
        <div className="w-[116px] ml-[5px] border-b-[4px] border-b-[#b5e8a0] text-center leading-[22px]">Filters &amp; Layers</div>
      </div>
      <div className="h-[3px]" />
      <div className="h-[6px] bg-[#cdcdcd]" />
      <div className="flex-1 min-h-0 overflow-hidden flex items-start justify-between pl-[5px] pt-[5px] text-[#444]">
        <span className="text-[22px] leading-[30px]">Features</span>
        <div className="pt-[6px]">
          <PanelControls />
        </div>
      </div>
    </div>
  );
}

export default function App() {
  return (
    <div className="w-[1920px] h-[642px] overflow-hidden flex flex-col bg-[#e5e5e5] font-['Open_Sans','Liberation_Sans',sans-serif]">
      <TitleBar />
      <Ribbon />
      <PathBar />
      <div className="flex-1 flex min-h-0">
        <LeftPanel />
        <CenterPanel />
        <RightPanel />
        <div className="flex-1 relative">
          <div className="pl-[2px] pt-[9px] text-[14px] text-[#444] [writing-mode:vertical-rl]">Portals</div>
          <div className="absolute right-0 top-0 w-[7px] h-[55px] bg-[#efefef]" />
        </div>
      </div>
    </div>
  );
}
